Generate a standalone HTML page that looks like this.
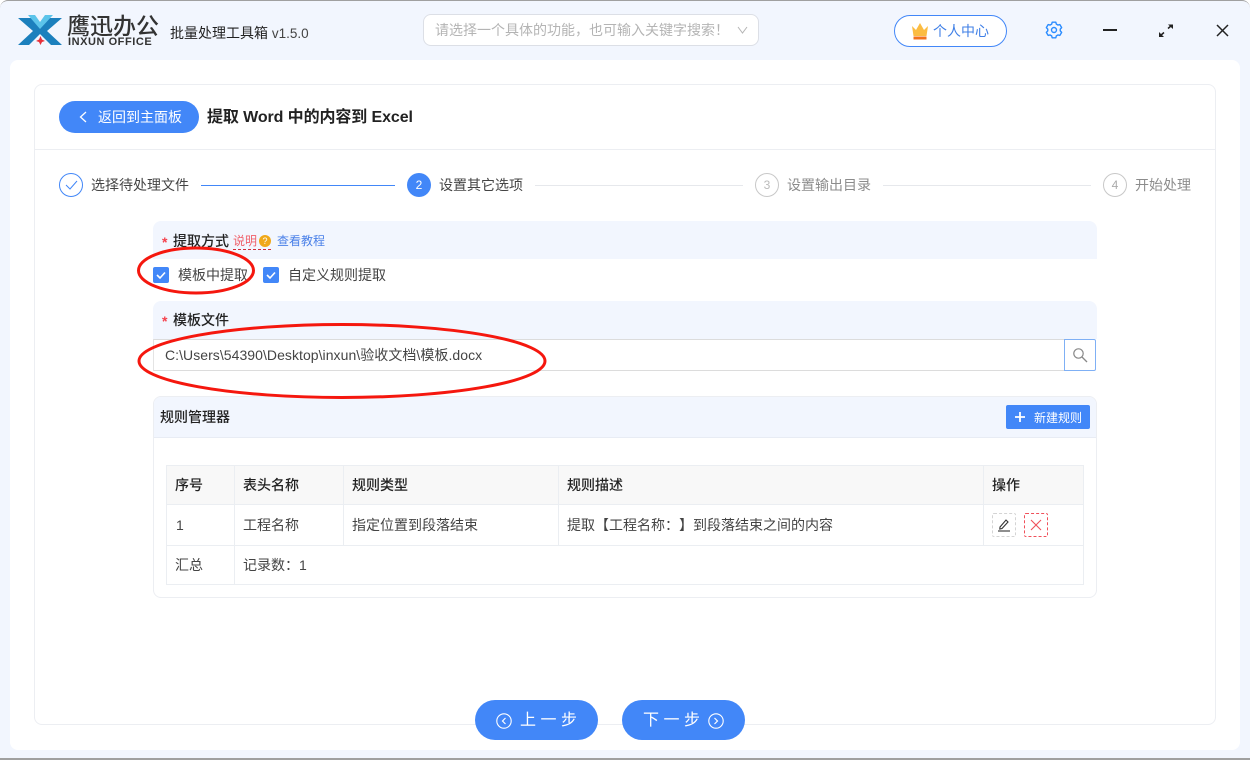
<!DOCTYPE html>
<html lang="zh"><head><meta charset="utf-8"><style>
*{box-sizing:border-box;margin:0;padding:0;text-spacing-trim:space-all}
html,body{width:1250px;height:760px;overflow:hidden;background:#fff}
body{position:relative;font-family:"Liberation Sans","Noto Sans CJK SC",sans-serif;font-size:14px;color:#333}
.a{position:absolute;white-space:nowrap}
.t{position:absolute;white-space:nowrap;line-height:20px;height:20px}
.b{font-weight:500;color:#222}
svg{position:absolute;overflow:visible}
.cb{position:absolute;width:16px;height:16px;background:#4287f8;border-radius:2px}
.ln{position:absolute;background:#ebeef2}
</style></head><body>
<div class="a" style="left:0;top:0;width:1250px;height:760px;background:#f2f6fe;border-top:1px solid #a0a0a0;border-bottom:2px solid #a0a0a0;border-radius:8px 8px 0 0"></div>
<div class="a" style="left:10px;top:60px;width:1230px;height:690px;background:#fff;border-radius:8px"></div>
<div class="a" style="left:34px;top:84px;width:1182px;height:641px;border:1px solid #eceef2;border-radius:8px"></div>
<div class="a" style="left:35px;top:149px;width:1180px;height:1px;background:#eceef2"></div>

<!-- logo -->
<svg style="left:18px;top:14px" width="44" height="31" viewBox="0 0 44 31">
<path d="M0 4H13L25 17L11 31H0L15 17Z" fill="#1c80bd"/>
<path d="M44 4H31L19 17L33 31H44L29 17Z" fill="#1c80bd"/>
<path d="M10 1H17L22 8L27 1H35L22 15Z" fill="#5cc4ea"/>
<path d="M22.500 22L24 25.500L27 27L24 28L22.500 31L21 28L18 27L21 25.500Z" fill="#e8303a"/></svg>
<div class="t" style="left:67px;top:12px;font-size:23px;height:28px;line-height:28px;font-weight:500;color:#333">鹰迅办公</div>
<div class="t" style="left:68px;top:32px;font-size:11px;font-weight:700;letter-spacing:.55px;color:#333">INXUN OFFICE</div>
<div class="t" style="left:170px;top:23px;color:#222">批量处理工具箱 <span style="font-size:13.500px;color:#444">v1.5.0</span></div>

<!-- search -->
<div class="a" style="left:423px;top:14px;width:336px;height:32px;background:#fff;border:1px solid #dcdfe6;border-radius:8px"></div>
<div class="t" style="left:435px;top:20px;color:#b4b4b4">请选择一个具体的功能，也可输入关键字搜索！</div>
<svg style="left:737px;top:26px" width="11" height="8"><path d="M1 1L5.500 7L10 1" fill="none" stroke="#b4b4b4" stroke-width="1"/></svg>

<!-- user -->
<div class="a" style="left:894px;top:15px;width:113px;height:32px;background:#fff;border:1px solid #4287f8;border-radius:16px"></div>
<svg style="left:911px;top:23px" width="18" height="17" viewBox="0 0 18 17"><path d="M1 3L5 7L9 0L13 7L17 3L15.500 13H2.500Z" fill="#fbbc42"/><rect x="2.500" y="13.500" width="13" height="3" fill="#f2711c"/></svg>
<div class="t" style="left:933px;top:21px;color:#3f7fe6">个人中心</div>

<!-- window controls -->
<svg style="left:1045px;top:21px" width="18" height="18" viewBox="0 0 18 18"><path d="M7.200 1.200H10.800L11.360 3.160L12.880 4.040L14.850 3.540L16.650 6.660L15.240 8.120V9.880L16.650 11.340L14.850 14.460L12.880 13.960L11.360 14.840L10.800 16.800H7.200L6.640 14.840L5.120 13.960L3.150 14.460L1.350 11.340L2.760 9.880V8.120L1.350 6.660L3.150 3.540L5.120 4.040L6.640 3.160Z" fill="none" stroke="#2b8cff" stroke-width="1.400" stroke-linejoin="round"/><circle cx="9" cy="9" r="2.500" fill="none" stroke="#2b8cff" stroke-width="1.400"/></svg>
<div class="a" style="left:1103px;top:29px;width:14px;height:2px;background:#222"></div>
<svg style="left:1159px;top:24px" width="14" height="13" viewBox="0 0 14 13"><path d="M1.500 11.500L5 8.500M9 4.500L12.500 1.500" fill="none" stroke="#222" stroke-width="1.500"/><path d="M9 0.500H14V5Z M0 8V13H5Z" fill="#222"/></svg>
<svg style="left:1216px;top:24px" width="13" height="13" viewBox="0 0 13 13"><path d="M1 1L12 12M12 1L1 12" stroke="#222" stroke-width="1.500"/></svg>

<!-- header -->
<div class="a" style="left:59px;top:101px;width:140px;height:32px;background:#4287f8;border-radius:16px"></div>
<svg style="left:79px;top:111px" width="8" height="12"><path d="M7 1L1.500 6L7 11" fill="none" stroke="#fff" stroke-width="1.300"/></svg>
<div class="t" style="left:98px;top:107px;color:#fff">返回到主面板</div>
<div class="t" style="left:207px;top:108px;font-size:16px;font-weight:700;color:#222;letter-spacing:-.1px">提取 Word 中的内容到 Excel</div>

<!-- steps -->
<div class="a" style="left:59px;top:173px;width:24px;height:24px;border:1px solid #4287f8;border-radius:50%"></div>
<svg style="left:65px;top:180px" width="13" height="10"><path d="M1 5L5 9L12 1" fill="none" stroke="#4287f8" stroke-width="1"/></svg>
<div class="t" style="left:91px;top:175px;color:#444">选择待处理文件</div>
<div class="a" style="left:201px;top:185px;width:194px;height:1px;background:#4287f8"></div>
<div class="a" style="left:407px;top:173px;width:24px;height:24px;background:#4287f8;border-radius:50%;color:#fff;text-align:center;line-height:25px;font-size:12px">2</div>
<div class="t" style="left:439px;top:175px;color:#444">设置其它选项</div>
<div class="a" style="left:535px;top:185px;width:208px;height:1px;background:#e6e8ec"></div>
<div class="a" style="left:755px;top:173px;width:24px;height:24px;border:1px solid #c8c8c8;border-radius:50%;color:#bbb;text-align:center;line-height:23px;font-size:12px">3</div>
<div class="t" style="left:787px;top:175px;color:#8c8c8c">设置输出目录</div>
<div class="a" style="left:883px;top:185px;width:208px;height:1px;background:#e6e8ec"></div>
<div class="a" style="left:1103px;top:173px;width:24px;height:24px;border:1px solid #c8c8c8;border-radius:50%;color:#aaa;text-align:center;line-height:23px;font-size:12px">4</div>
<div class="t" style="left:1135px;top:175px;color:#8c8c8c">开始处理</div>

<!-- section 1 -->
<div class="a" style="left:153px;top:221px;width:944px;height:38px;background:#f2f6fe;border-radius:8px 8px 0 0"></div>
<div class="t" style="left:162px;top:232px;color:#f5424d;font-weight:700">*</div>
<div class="t b" style="left:173px;top:231px">提取方式</div>
<div class="t" style="left:233px;top:232px;font-size:12px;color:#f0606a;height:18px;line-height:18px;width:38px;border-bottom:1px dashed #d0303a">说明</div>
<div class="a" style="left:259px;top:235px;width:12px;height:12px;background:#f0a818;border-radius:50%;color:#fff;font-size:9px;line-height:12px;text-align:center">?</div>
<div class="t" style="left:277px;top:231px;font-size:12px;color:#4a80e8">查看教程</div>
<div class="cb" style="left:153px;top:267px"></div>
<svg style="left:156px;top:271px" width="10" height="8"><path d="M1 4L4 7L9 1.500" fill="none" stroke="#fff" stroke-width="1.600"/></svg>
<div class="t" style="left:178px;top:265px;color:#444">模板中提取</div>
<div class="cb" style="left:263px;top:267px"></div>
<svg style="left:266px;top:271px" width="10" height="8"><path d="M1 4L4 7L9 1.500" fill="none" stroke="#fff" stroke-width="1.600"/></svg>
<div class="t" style="left:288px;top:265px;color:#444">自定义规则提取</div>

<!-- section 2 -->
<div class="a" style="left:153px;top:301px;width:944px;height:38px;background:#f2f6fe;border-radius:8px 8px 0 0"></div>
<div class="t" style="left:162px;top:311px;color:#f5424d;font-weight:700">*</div>
<div class="t b" style="left:173px;top:310px">模板文件</div>
<div class="a" style="left:153px;top:339px;width:912px;height:32px;background:#fff;border:1px solid #dcdcdc;border-left:1px solid #e4e4e4"></div>
<div class="t" style="left:165px;top:345px;color:#444;letter-spacing:.05px">C:\Users\54390\Desktop\inxun\验收文档\模板.docx</div>
<div class="a" style="left:1064px;top:339px;width:32px;height:32px;background:#fff;border:1px solid #7fb0f5;border-radius:0 2px 2px 0"></div>
<svg style="left:1073px;top:348px" width="14" height="14" viewBox="0 0 14 14"><circle cx="5.500" cy="5.500" r="4.700" fill="none" stroke="#888" stroke-width="1.200"/><path d="M9 9L14 14" stroke="#888" stroke-width="1.300"/></svg>

<!-- section 3 -->
<div class="a" style="left:153px;top:396px;width:944px;height:202px;border:1px solid #eceef2;border-radius:8px;overflow:hidden"><div style="height:41px;background:#f2f6fe;border-bottom:1px solid #e8ecf4"></div></div>
<div class="t b" style="left:160px;top:407px">规则管理器</div>
<div class="a" style="left:1006px;top:405px;width:84px;height:24px;background:#4287f8;border-radius:2px"></div>
<svg style="left:1014px;top:411px" width="12" height="12"><path d="M6 1V11M1 6H11" stroke="#fff" stroke-width="1.800"/></svg>
<div class="t" style="left:1034px;top:408px;font-size:12px;color:#fff">新建规则</div>

<!-- table -->
<div class="a" style="left:166px;top:465px;width:918px;height:40px;background:#f8f8f8"></div>
<div class="ln" style="left:166px;top:465px;width:918px;height:1px"></div>
<div class="ln" style="left:166px;top:504px;width:918px;height:1px"></div>
<div class="ln" style="left:166px;top:545px;width:918px;height:1px"></div>
<div class="ln" style="left:166px;top:584px;width:918px;height:1px"></div>
<div class="ln" style="left:234px;top:465px;width:1px;height:120px"></div>
<div class="ln" style="left:343px;top:465px;width:1px;height:81px"></div>
<div class="ln" style="left:558px;top:465px;width:1px;height:81px"></div>
<div class="ln" style="left:983px;top:465px;width:1px;height:81px"></div>
<div class="ln" style="left:1083px;top:465px;width:1px;height:120px"></div>
<div class="ln" style="left:166px;top:465px;width:1px;height:120px"></div>
<div class="t b" style="left:175px;top:475px">序号</div>
<div class="t b" style="left:243px;top:475px">表头名称</div>
<div class="t b" style="left:352px;top:475px">规则类型</div>
<div class="t b" style="left:567px;top:475px">规则描述</div>
<div class="t b" style="left:992px;top:475px">操作</div>
<div class="t" style="left:176px;top:515px;color:#444">1</div>
<div class="t" style="left:243px;top:515px;color:#444">工程名称</div>
<div class="t" style="left:352px;top:515px;color:#444">指定位置到段落结束</div>
<div class="t" style="left:567px;top:515px;color:#444">提取【工程名称：】到段落结束之间的内容</div>
<div class="a" style="left:992px;top:513px;width:24px;height:24px;border:1px dashed #d4d4d4;border-radius:2px"></div>
<svg style="left:997px;top:518px" width="14" height="14" viewBox="0 0 14 14"><path d="M3 9L9 2L11 4L5 10.500L2.800 11Z" fill="none" stroke="#333" stroke-width="1.100"/><path d="M1 13H13" stroke="#333" stroke-width="1.100"/></svg>
<div class="a" style="left:1024px;top:513px;width:24px;height:24px;border:1px dashed #f0505a;border-radius:2px"></div>
<svg style="left:1030px;top:519px" width="12" height="12"><path d="M1 1L11 11M11 1L1 11" stroke="#f0505a" stroke-width="1.100"/></svg>
<div class="t" style="left:175px;top:555px;color:#444">汇总</div>
<div class="t" style="left:243px;top:555px;color:#444">记录数：1</div>

<!-- bottom buttons -->
<div class="a" style="left:475px;top:700px;width:123px;height:40px;background:#4287f8;border-radius:20px"></div>
<svg style="left:496px;top:713px" width="16" height="16" viewBox="0 0 16 16"><circle cx="8" cy="8" r="7.200" fill="none" stroke="#fff" stroke-width="1.100"/><path d="M9.500 5L6.500 8L9.500 11" fill="none" stroke="#fff" stroke-width="1.200"/></svg>
<div class="t" style="left:520px;top:711px;font-size:16px;letter-spacing:4.500px;color:#fff">上一步</div>
<div class="a" style="left:622px;top:700px;width:123px;height:40px;background:#4287f8;border-radius:20px"></div>
<div class="t" style="left:643px;top:711px;font-size:16px;letter-spacing:4.500px;color:#fff">下一步</div>
<svg style="left:708px;top:713px" width="16" height="16" viewBox="0 0 16 16"><circle cx="8" cy="8" r="7.200" fill="none" stroke="#fff" stroke-width="1.100"/><path d="M6.500 5L9.500 8L6.500 11" fill="none" stroke="#fff" stroke-width="1.200"/></svg>

<!-- red annotation ellipses -->
<svg style="left:0;top:0" width="1250" height="760">
<ellipse cx="196" cy="270.500" rx="57.500" ry="22.500" fill="none" stroke="#f5170e" stroke-width="3"/>
<ellipse cx="342" cy="361" rx="203" ry="36.500" fill="none" stroke="#f5170e" stroke-width="3"/>
</svg>
</body></html>
